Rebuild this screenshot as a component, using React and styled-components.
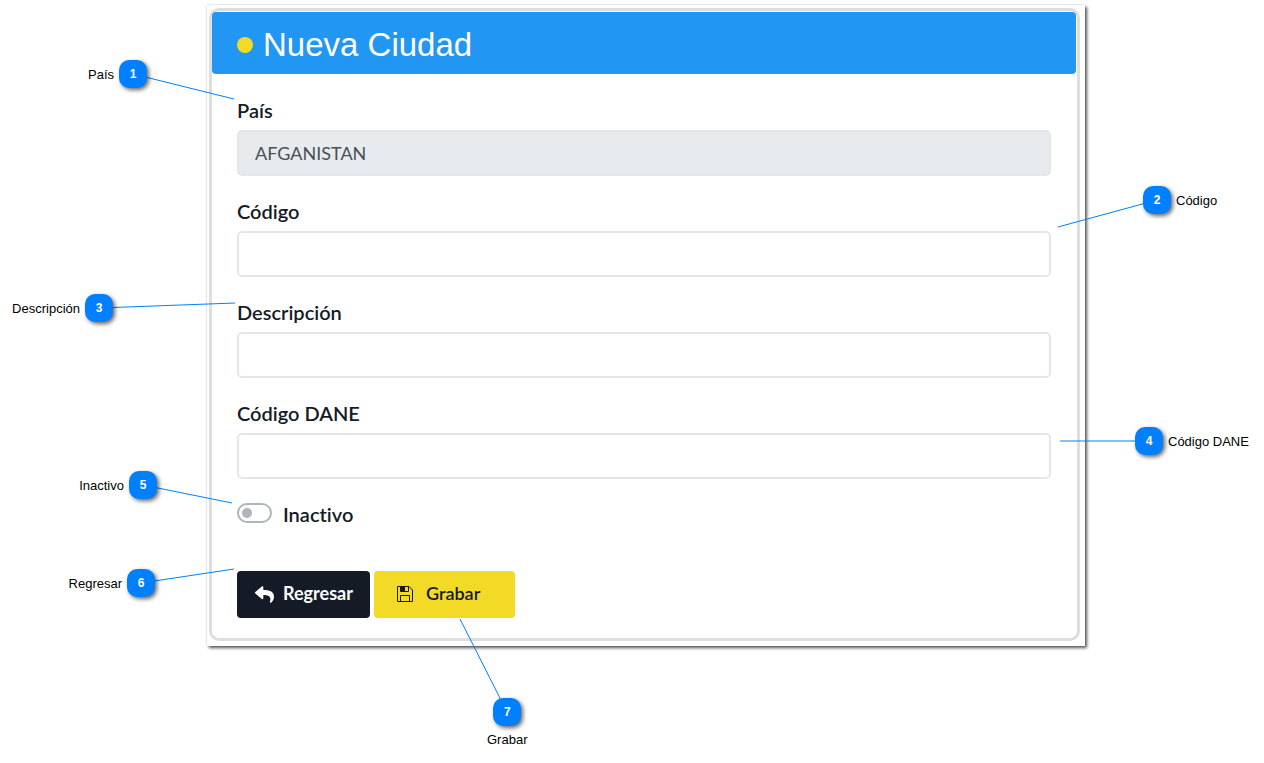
import { useId, useState } from "react";
import styled, { createGlobalStyle } from "styled-components";
import { FaReply } from "react-icons/fa";

const GlobalStyle = createGlobalStyle`
  * {
    box-sizing: border-box;
  }

  body {
    margin: 0;
    background-color: #ffffff;
    font-family: "Liberation Sans", Arial, sans-serif;
  }
`;

const Page = styled.main`
  min-height: 100vh;
  padding: 5px 179px 40px 207px;
`;

const Figure = styled.div`
  position: relative;
`;

const Sheet = styled.div`
  padding: 3px 5px 5px 2px;
  background-color: #ffffff;
  box-shadow:
    0 0 2px rgba(0, 0, 0, 0.2),
    2px 2px 3px rgba(0, 0, 0, 0.65);
`;

const Card = styled.form`
  border: 3px solid #dedede;
  border-radius: 10px;
  padding: 1px 1px 0 0;
`;

const Header = styled.header`
  display: flex;
  align-items: center;
  gap: 10px;
  height: 62px;
  padding: 3px 25px 0;
  border-radius: 4px;
  background-color: #2196f3;
`;

const Dot = styled.span`
  width: 16px;
  height: 16px;
  border-radius: 50%;
  background-color: #f2da26;
`;

const Title = styled.h1`
  margin: 0;
  font-size: 33px;
  font-weight: 400;
  line-height: 38px;
  color: #ffffff;
`;

const Body = styled.div`
  display: flex;
  flex-direction: column;
  gap: 23px;
  padding: 24px 25px 20px;
  font-family: Lato, sans-serif;
  font-variant-ligatures: none;
  color: #151b26;
`;

const FieldGroup = styled.div`
  display: flex;
  flex-direction: column;
  gap: 8px;
`;

const Label = styled.label`
  font-size: 20px;
  font-weight: 600;
  line-height: 24px;
`;

const Input = styled.input`
  width: 100%;
  height: 46px;
  padding: 0 16px;
  border: 2px solid #e3e7e8;
  border-radius: 5px;
  background-color: #ffffff;
  font-family: inherit;
  font-size: 18px;
  color: #495057;

  &:disabled {
    background-color: #e7ebed;
  }
`;

const SwitchRow = styled.div`
  display: flex;
  align-items: center;
  gap: 11px;
`;

const Switch = styled.input`
  appearance: none;
  display: flex;
  align-items: center;
  width: 35px;
  height: 20px;
  margin: 0 0 2px;
  padding: 0 3px;
  border: 2px solid #adb5bd;
  border-radius: 10px;

  &::before {
    content: "";
    width: 10px;
    height: 10px;
    border-radius: 50%;
    background-color: #adb5bd;
  }

  &:checked {
    justify-content: flex-end;
  }
`;

const Actions = styled.div`
  display: flex;
  gap: 4px;
  padding-top: 22px;
`;

const Button = styled.button`
  display: flex;
  align-items: center;
  gap: ${({ $wide }) => ($wide ? "13px" : "9px")};
  height: 47px;
  padding: ${({ $wide }) => ($wide ? "0 35px 4px 23px" : "0 17px 4px 18px")};
  border: none;
  border-radius: 4px;
  background-color: ${({ $wide }) => ($wide ? "#f2da26" : "#151b26")};
  color: ${({ $wide }) => ($wide ? "#151b26" : "#ffffff")};
  font-family: inherit;
  font-size: 18px;
  font-weight: ${({ $wide }) => ($wide ? 600 : 700)};

  svg {
    margin-top: 3px;
  }
`;

const pinPlace = {
  left: ({ $gap }) => `right: calc(100% + ${$gap}px);`,
  right: ({ $gap }) => `left: calc(100% + ${$gap}px);`,
  bottom: ({ $gap }) => `left: ${$gap}px;`,
};

const pinDirection = {
  left: "row-reverse",
  right: "row",
  bottom: "column",
};

// z-index gives each pin its own stacking context, so the line stays under the badge
const Pin = styled.div`
  position: absolute;
  z-index: 1;
  top: ${({ $top }) => $top}px;
  ${(props) => pinPlace[props.$side](props)}
  display: flex;
  flex-direction: ${({ $side }) => pinDirection[$side]};
  align-items: center;
  gap: 5px;
  font-size: 13px;
  line-height: 16px;
  white-space: nowrap;
  color: #000000;
`;

const Caption = styled.span`
  padding-top: 1px;
`;

const Badge = styled.span`
  position: relative;
  display: flex;
  align-items: center;
  justify-content: center;
  width: 28px;
  height: 28px;
  border-radius: 10px;
  background-color: #0080ff;
  box-shadow: 2px 2px 4px rgba(0, 0, 0, 0.6);
  font-size: 12px;
  font-weight: 700;
  color: #ffffff;
`;

const Leader = styled.svg`
  position: absolute;
  z-index: -1;
  top: 50%;
  left: 50%;
  width: 1px;
  height: 1px;
  overflow: visible;
  pointer-events: none;
`;

// "to" is where the line ends, measured from the centre of the badge
const callouts = [
  { number: 1, text: "País", side: "left", top: 55, gap: 60, to: [101, 25] },
  { number: 2, text: "Código", side: "right", top: 181, gap: 58, to: [-99, 27] },
  { number: 3, text: "Descripción", side: "left", top: 289, gap: 94, to: [136, -5] },
  { number: 4, text: "Código DANE", side: "right", top: 422, gap: 50, to: [-89, 0] },
  { number: 5, text: "Inactivo", side: "left", top: 466, gap: 50, to: [89, 18] },
  { number: 6, text: "Regresar", side: "left", top: 564, gap: 52, to: [93, -14] },
  { number: 7, text: "Grabar", side: "bottom", top: 693, gap: 280, to: [-47, -93] },
];

const Callout = ({ number, text, side, top, gap, to }) => (
  <Pin $side={side} $top={top} $gap={gap}>
    <Badge>
      <Leader aria-hidden="true">
        <line x1="0" y1="0" x2={to[0]} y2={to[1]} stroke="#0080ff" />
      </Leader>
      {number}
    </Badge>
    <Caption>{text}</Caption>
  </Pin>
);

const SaveIcon = () => (
  <svg width="16" height="16" viewBox="0 0 16 16" fill="none" aria-hidden="true">
    <path d="M.5 .5H12L15.5 4V15.5H.5Z" stroke="currentColor" />
    <path d="M3.5 .5V5.5H11.5V.5M3.5 15.5V9.5H12.5V15.5" stroke="currentColor" />
    <path d="M4 1H8V5H4Z" fill="currentColor" />
  </svg>
);

const Field = ({ label, ...rest }) => {
  const id = useId();

  return (
    <FieldGroup>
      <Label htmlFor={id}>{label}</Label>
      <Input id={id} type="text" {...rest} />
    </FieldGroup>
  );
};

const App = () => {
  const [inactive, setInactive] = useState(false);

  return (
    <>
      <GlobalStyle />
      <Page>
        <Figure>
          <Sheet>
            <Card onSubmit={(e) => e.preventDefault()}>
              <Header>
                <Dot />
                <Title>Nueva Ciudad</Title>
              </Header>
              <Body>
                <Field label="País" defaultValue="AFGANISTAN" disabled />
                <Field label="Código" name="codigo" />
                <Field label="Descripción" name="descripcion" />
                <Field label="Código DANE" name="codigoDane" />
                <SwitchRow>
                  <Switch
                    id="inactivo"
                    type="checkbox"
                    role="switch"
                    checked={inactive}
                    onChange={(e) => setInactive(e.target.checked)}
                  />
                  <Label htmlFor="inactivo">Inactivo</Label>
                </SwitchRow>
                <Actions>
                  <Button type="button">
                    <FaReply size={19} />
                    Regresar
                  </Button>
                  <Button type="submit" $wide>
                    <SaveIcon />
                    Grabar
                  </Button>
                </Actions>
              </Body>
            </Card>
          </Sheet>
          {callouts.map((callout) => (
            <Callout key={callout.number} {...callout} />
          ))}
        </Figure>
      </Page>
    </>
  );
};

export default App;
